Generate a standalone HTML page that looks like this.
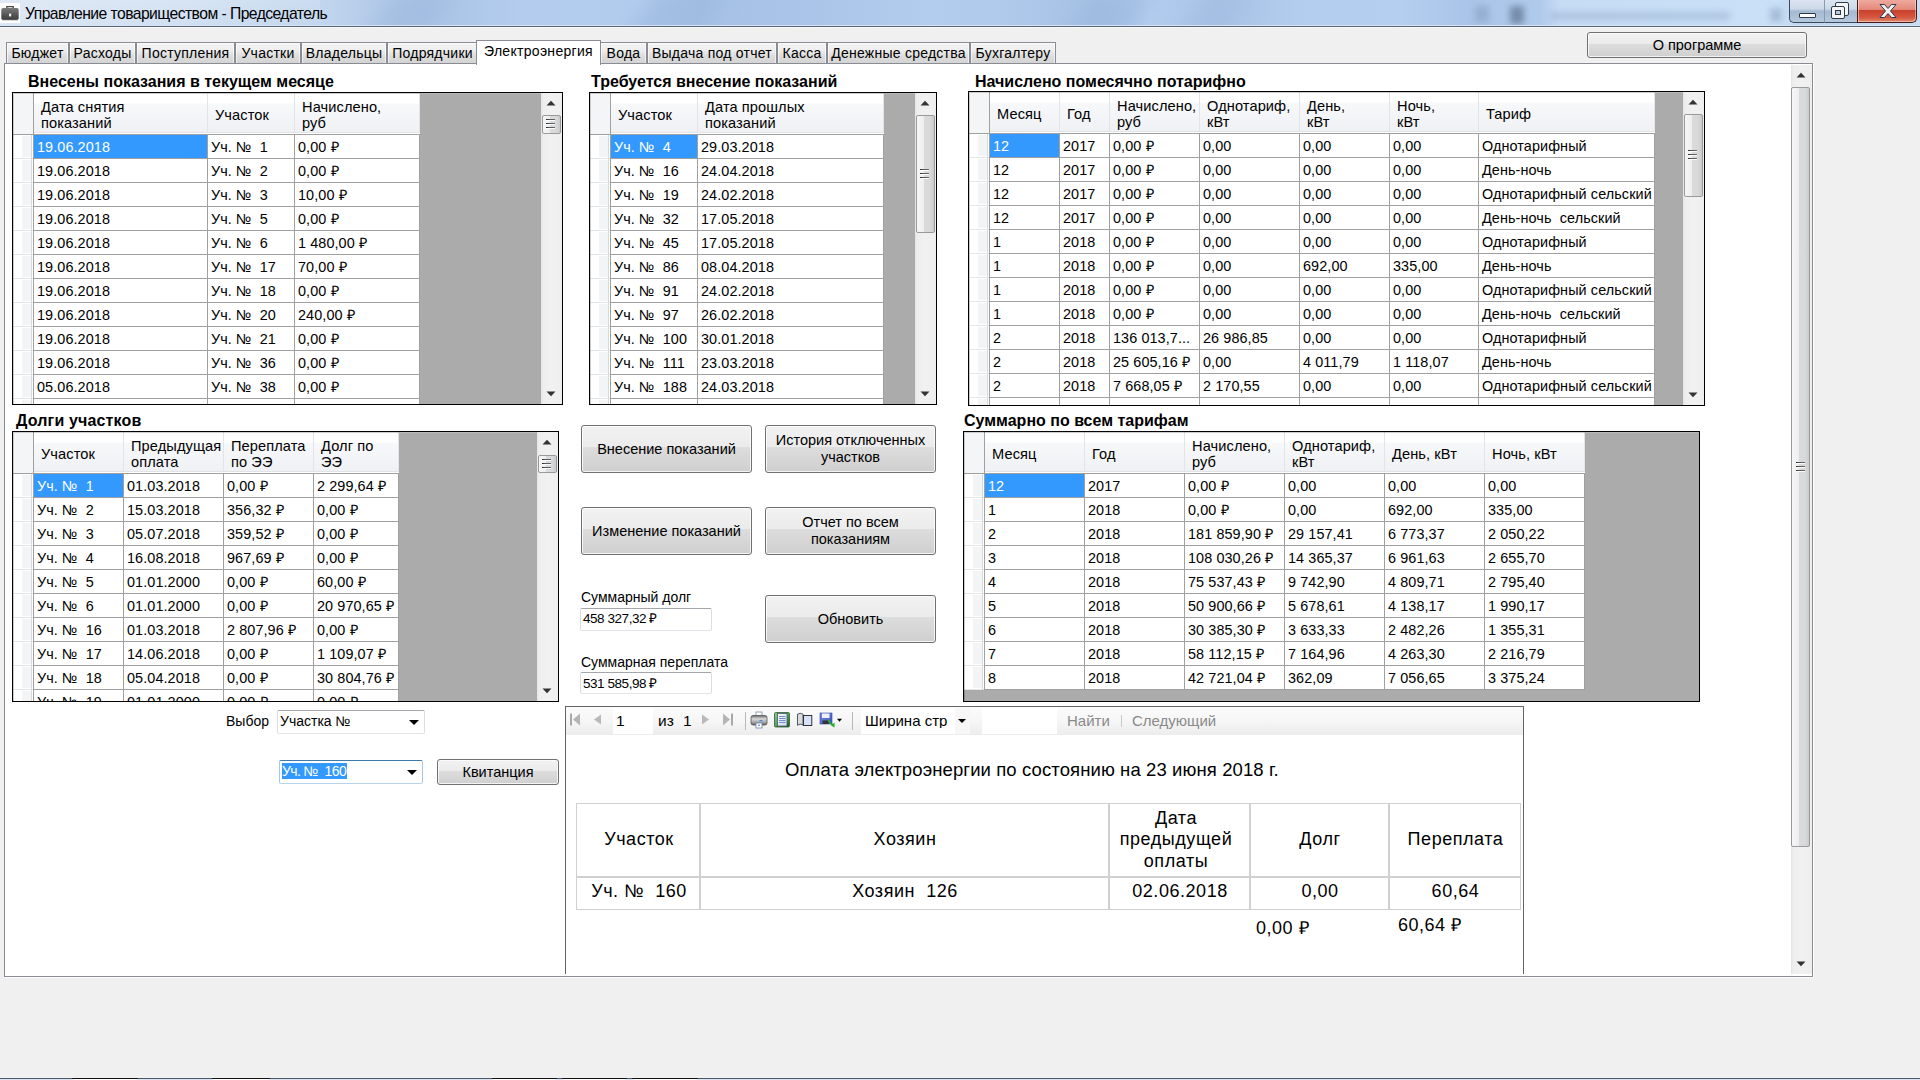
<!DOCTYPE html><html><head><meta charset='utf-8'><style>
*{box-sizing:border-box;margin:0;padding:0}
html,body{width:1920px;height:1080px;overflow:hidden;background:#f0f0f0;font-family:"Liberation Sans", sans-serif;font-size:14px;color:#000}
.a{position:absolute}
.t{position:absolute;white-space:pre;line-height:1}
.btn{position:absolute;border:1px solid #707070;border-radius:3px;background:linear-gradient(#f2f2f2 0%,#ebebeb 46%,#dddddd 46%,#cfcfcf 100%);box-shadow:inset 0 0 0 1px rgba(255,255,255,.75);display:flex;align-items:center;justify-content:center;text-align:center;line-height:17px;font-size:14.5px;padding-top:0px}
.tab{position:absolute;top:42px;height:22px;border:1px solid #898c95;border-bottom:none;background:linear-gradient(#f3f3f3 0%,#eeeeee 35%,#dedede 60%,#d2d2d2 100%);box-shadow:inset 0 0 0 1px rgba(255,255,255,.6);font-size:14px;padding-top:2px;text-align:center;white-space:pre;letter-spacing:0.25px}
.g{position:absolute;border:1px solid #000;background:#ababab;overflow:hidden}
.hc{position:absolute;background:linear-gradient(#fff 0,#fff 10px,#f7f8fa 11px,#f0f1f4 39px);border-right:1px solid #e3e4e7;white-space:pre;line-height:17px}
.rc{position:absolute;background:#fff;border-right:1px solid #a0a0a0;border-bottom:1px solid #a0a0a0;white-space:pre;overflow:hidden;line-height:17px;padding-left:3px;padding-top:3.5px;font-size:14.4px;letter-spacing:0.1px}
.sel{background:#3399ff;color:#fff}
.rh{position:absolute;background:linear-gradient(90deg,#fff 0,#fcfcfd 5px,#ececef 17px,#e8e8ea 18px,#fff 19px);border-bottom:1px solid #e9e9ea;border-right:1px solid #a0a0a0}
</style></head><body>
<div class='a' style='left:0;top:0;width:1920px;height:25px;overflow:hidden;background:linear-gradient(90deg,#dbe6f4 0px,#cfdff1 200px,#c2d6ee 320px,#a9c3e5 420px,#b4cdee 520px,#b2ccee 640px,#a6c1e4 700px,#a9c4e8 800px,#b3cdee 930px,#b0caec 1000px,#a5c0e3 1100px,#b3cdef 1150px,#a9c4e6 1220px,#b3cdee 1300px,#b5cff0 1400px,#a9c4e8 1470px,#b0caec 1540px,#c6dcf5 1560px,#c9e0f7 1780px,#c0d6f0 1800px,#c8dcf2 1920px)'>
<div class='a' style='left:380px;top:-10px;width:60px;height:50px;background:#9fbadf;filter:blur(12px);transform:skewX(-35deg);opacity:.6'></div>
<div class='a' style='left:640px;top:-10px;width:70px;height:50px;background:#9cb8de;filter:blur(12px);transform:skewX(-35deg);opacity:.6'></div>
<div class='a' style='left:1080px;top:-10px;width:60px;height:50px;background:#9cb8de;filter:blur(12px);transform:skewX(-35deg);opacity:.6'></div>
<div class='a' style='left:1190px;top:-10px;width:50px;height:50px;background:#a0bbe0;filter:blur(12px);transform:skewX(-35deg);opacity:.5'></div>
<div class='a' style='left:1475px;top:6px;width:14px;height:16px;background:#90aacb;filter:blur(3px);opacity:.8'></div>
<div class='a' style='left:1510px;top:6px;width:14px;height:18px;background:#6a7f9c;filter:blur(3px);opacity:.8'></div>
<div class='a' style='left:1550px;top:12px;width:180px;height:8px;background:#9fb6d3;filter:blur(3px);opacity:.6'></div>
<div class='a' style='left:1770px;top:8px;width:12px;height:14px;background:#8ea6c6;filter:blur(3px);opacity:.6'></div>
<div class='a' style='left:0;top:0;width:320px;height:25px;background:linear-gradient(rgba(255,255,255,.15),rgba(255,255,255,0))'></div>
</div>
<div class='a' style='left:0;top:25px;width:1920px;height:1px;background:#d6e4f5'></div>
<div class='a' style='left:0;top:26px;width:1920px;height:1px;background:#5a6678'></div>
<div class='a' style='left:0;top:27px;width:1920px;height:1px;background:#f8f8f7'></div>

<div class='a' style='left:0;top:3px;width:20px;height:20px;background:#fff'></div>
<svg class='a' style='left:0;top:3px' width='20' height='20' viewBox='0 0 20 20'>
<defs><linearGradient id='bc' x1='0' y1='0' x2='0' y2='1'><stop offset='0' stop-color='#7a7a7a'/><stop offset='.45' stop-color='#5c5c5c'/><stop offset='1' stop-color='#3e3e3e'/></linearGradient></defs>
<path d='M6.8 5.2V3.6h6.4v1.6' fill='none' stroke='#4a4a4a' stroke-width='1.3'/>
<rect x='1.3' y='5' width='17.4' height='12' rx='1.8' fill='url(#bc)'/>
<rect x='2' y='16.6' width='16' height='1' fill='#9a9a9a' opacity='.6'/>
<rect x='9' y='10.6' width='2.2' height='2.8' fill='#f0f0f0'/>
</svg>
<div class='t' style='left:25px;top:6px;font-size:15.7px;letter-spacing:-0.55px'>Управление товариществом - Председатель</div>
<div class='a' style='left:1789px;top:-2px;width:36px;height:25px;border:1px solid #3b4a5e;border-top:none;border-right:none;border-radius:0 0 0 5px;background:linear-gradient(#dfe8f3 0,#cdd9e8 45%,#a6b9d2 55%,#b6c8de 100%)'></div>
<div class='a' style='left:1824px;top:-2px;width:34px;height:25px;border-bottom:1px solid #3b4a5e;border-left:1px solid #8a9ab0;background:linear-gradient(#dfe8f3 0,#cdd9e8 45%,#a6b9d2 55%,#b6c8de 100%)'></div>
<div class='a' style='left:1857px;top:-2px;width:60px;height:25px;border:1px solid #4a1a12;border-top:none;border-radius:0 0 5px 0;background:linear-gradient(#f2b0a6 0,#e2897a 48%,#c9412d 52%,#d6563f 80%,#e08a6c 100%);box-shadow:inset 1px 0 0 rgba(255,255,255,.5),inset -1px -1px 0 rgba(255,255,255,.4)'></div>
<div class='a' style='left:1799px;top:13px;width:17px;height:5px;background:#fff;border:1px solid #2c3a4c;border-radius:1px'></div>
<div class='a' style='left:1835px;top:2px;width:14px;height:14px;background:#f4f4f4;border:1px solid #2c3a4c;border-radius:2px'></div>
<div class='a' style='left:1831px;top:6px;width:14px;height:13px;background:#f4f4f4;border:1px solid #2c3a4c;border-radius:2px'></div>
<div class='a' style='left:1835px;top:10px;width:6px;height:5px;background:#b8c8dc;border:1px solid #2c3a4c'></div>
<svg class='a' style='left:1876px;top:3px' width='24' height='16' viewBox='0 0 24 16'>
<path d='M4 1.5h4.5L12 5.5l3.5-4H20L14.5 8 20 14.5h-4.5L12 10.5l-3.5 4H4L9.5 8z' fill='#f2f2f2' stroke='#2c3a4c' stroke-width='1'/>
</svg>

<div class='tab' style='left:6px;width:63px'>Бюджет</div>
<div class='tab' style='left:69px;width:67px'>Расходы</div>
<div class='tab' style='left:136px;width:99px'>Поступления</div>
<div class='tab' style='left:235px;width:66px'>Участки</div>
<div class='tab' style='left:301px;width:86px'>Владельцы</div>
<div class='tab' style='left:387px;width:91px'>Подрядчики</div>
<div class='tab' style='left:600px;width:47px'>Вода</div>
<div class='tab' style='left:647px;width:130px'>Выдача под отчет</div>
<div class='tab' style='left:777px;width:50px'>Касса</div>
<div class='tab' style='left:827px;width:143px'>Денежные средства</div>
<div class='tab' style='left:970px;width:86px'>Бухгалтеру</div>
<div class='a' style='left:4px;top:63px;width:1809px;height:914px;background:#fff;border:1px solid #898c95'></div>
<div class='a' style='left:5px;top:977px;width:1809px;height:1px;background:#fff'></div><div class='a' style='left:1813px;top:64px;width:1px;height:914px;background:#fff'></div>
<div class='a' style='left:476px;top:40px;width:125px;height:25px;background:#fff;border:1px solid #898c95;border-bottom:none;font-size:14px;text-align:center;padding-top:2px;white-space:pre;letter-spacing:0.3px'>Электроэнергия</div>
<div class='btn' style='left:1587px;top:32px;width:220px;height:26px'>О программе</div>
<div class='a' style='left:1791px;top:65px;width:21px;height:909px;background:linear-gradient(90deg,#e3e3e3 0,#eeeeee 2px,#f1f1f1 50%,#eeeeee 100%)'></div><svg class='a' style='left:1796px;top:72px' width='10' height='6'><path d='M0.5 5.5L5 0.8 9.5 5.5z' fill='#333'/></svg><svg class='a' style='left:1796px;top:961px' width='10' height='6'><path d='M0.5 0.5L5 5.2 9.5 0.5z' fill='#333'/></svg><div class='a' style='left:1791px;top:87px;width:19px;height:760px;border:1px solid #9a9a9a;border-radius:2px;background:linear-gradient(90deg,#f6f6f6 0,#eeeeee 40%,#dadbdd 41%,#d7d8da 80%,#c9cacc 100%)'></div><div class='a' style='left:1796px;top:462px;width:9px;height:1px;background:linear-gradient(90deg,#222,#555 30%,#666);box-shadow:0 1px 0 rgba(255,255,255,.9)'></div><div class='a' style='left:1796px;top:466px;width:9px;height:1px;background:linear-gradient(90deg,#222,#555 30%,#666);box-shadow:0 1px 0 rgba(255,255,255,.9)'></div><div class='a' style='left:1796px;top:470px;width:9px;height:1px;background:linear-gradient(90deg,#222,#555 30%,#666);box-shadow:0 1px 0 rgba(255,255,255,.9)'></div>
<div class='t' style='left:28px;top:74px;font-weight:bold;font-size:16px;letter-spacing:0px'>Внесены показания в текущем месяце</div>
<div class='g' style='left:12px;top:92px;width:551px;height:313px'><div class='a' style='left:0;top:0;width:20px;height:41px;background:#f4f5f7;box-shadow:inset 1px 1px 0 #fff'></div><div class='a' style='left:20px;top:0;width:1px;height:41px;background:#a0a0a0'></div><div class='hc' style='left:21px;top:0;width:174px;height:41px'></div><div class='t' style='left:28px;top:6.3px;line-height:16px;font-size:14.6px;letter-spacing:0.1px'>Дата снятия
показаний</div><div class='hc' style='left:195px;top:0;width:87px;height:41px'></div><div class='t' style='left:202px;top:14.3px;line-height:16px;font-size:14.6px;letter-spacing:0.1px'>Участок</div><div class='hc' style='left:282px;top:0;width:125px;height:41px'></div><div class='t' style='left:289px;top:6.3px;line-height:16px;font-size:14.6px;letter-spacing:0.1px'>Начислено,
руб</div><div class='a' style='left:21px;top:39px;width:386px;height:1px;background:#e2e3e6'></div><div class='a' style='left:21px;top:40px;width:386px;height:1px;background:#fff'></div><div class='a' style='left:0;top:41px;width:407px;height:1px;background:#a0a0a0'></div><div class='a' style='left:0;top:42px;width:20px;height:24px;background:#fff;border-bottom:1px solid #e4e5e7'></div><div class='a' style='left:9px;top:43px;width:9px;height:21px;background:#f3f4f6'></div><div class='a' style='left:18px;top:42px;width:1px;height:24px;background:#d9dadc'></div><div class='a' style='left:20px;top:42px;width:1px;height:24px;background:#a0a0a0'></div><div class='rc sel' style='left:21px;top:42px;width:174px;height:24px'>19.06.2018</div><div class='rc' style='left:195px;top:42px;width:87px;height:24px'>Уч. №  1</div><div class='rc' style='left:282px;top:42px;width:125px;height:24px'>0,00 ₽</div><div class='a' style='left:0;top:66px;width:20px;height:24px;background:#fff;border-bottom:1px solid #e4e5e7'></div><div class='a' style='left:9px;top:67px;width:9px;height:21px;background:#f3f4f6'></div><div class='a' style='left:18px;top:66px;width:1px;height:24px;background:#d9dadc'></div><div class='a' style='left:20px;top:66px;width:1px;height:24px;background:#a0a0a0'></div><div class='rc' style='left:21px;top:66px;width:174px;height:24px'>19.06.2018</div><div class='rc' style='left:195px;top:66px;width:87px;height:24px'>Уч. №  2</div><div class='rc' style='left:282px;top:66px;width:125px;height:24px'>0,00 ₽</div><div class='a' style='left:0;top:90px;width:20px;height:24px;background:#fff;border-bottom:1px solid #e4e5e7'></div><div class='a' style='left:9px;top:91px;width:9px;height:21px;background:#f3f4f6'></div><div class='a' style='left:18px;top:90px;width:1px;height:24px;background:#d9dadc'></div><div class='a' style='left:20px;top:90px;width:1px;height:24px;background:#a0a0a0'></div><div class='rc' style='left:21px;top:90px;width:174px;height:24px'>19.06.2018</div><div class='rc' style='left:195px;top:90px;width:87px;height:24px'>Уч. №  3</div><div class='rc' style='left:282px;top:90px;width:125px;height:24px'>10,00 ₽</div><div class='a' style='left:0;top:114px;width:20px;height:24px;background:#fff;border-bottom:1px solid #e4e5e7'></div><div class='a' style='left:9px;top:115px;width:9px;height:21px;background:#f3f4f6'></div><div class='a' style='left:18px;top:114px;width:1px;height:24px;background:#d9dadc'></div><div class='a' style='left:20px;top:114px;width:1px;height:24px;background:#a0a0a0'></div><div class='rc' style='left:21px;top:114px;width:174px;height:24px'>19.06.2018</div><div class='rc' style='left:195px;top:114px;width:87px;height:24px'>Уч. №  5</div><div class='rc' style='left:282px;top:114px;width:125px;height:24px'>0,00 ₽</div><div class='a' style='left:0;top:138px;width:20px;height:24px;background:#fff;border-bottom:1px solid #e4e5e7'></div><div class='a' style='left:9px;top:139px;width:9px;height:21px;background:#f3f4f6'></div><div class='a' style='left:18px;top:138px;width:1px;height:24px;background:#d9dadc'></div><div class='a' style='left:20px;top:138px;width:1px;height:24px;background:#a0a0a0'></div><div class='rc' style='left:21px;top:138px;width:174px;height:24px'>19.06.2018</div><div class='rc' style='left:195px;top:138px;width:87px;height:24px'>Уч. №  6</div><div class='rc' style='left:282px;top:138px;width:125px;height:24px'>1 480,00 ₽</div><div class='a' style='left:0;top:162px;width:20px;height:24px;background:#fff;border-bottom:1px solid #e4e5e7'></div><div class='a' style='left:9px;top:163px;width:9px;height:21px;background:#f3f4f6'></div><div class='a' style='left:18px;top:162px;width:1px;height:24px;background:#d9dadc'></div><div class='a' style='left:20px;top:162px;width:1px;height:24px;background:#a0a0a0'></div><div class='rc' style='left:21px;top:162px;width:174px;height:24px'>19.06.2018</div><div class='rc' style='left:195px;top:162px;width:87px;height:24px'>Уч. №  17</div><div class='rc' style='left:282px;top:162px;width:125px;height:24px'>70,00 ₽</div><div class='a' style='left:0;top:186px;width:20px;height:24px;background:#fff;border-bottom:1px solid #e4e5e7'></div><div class='a' style='left:9px;top:187px;width:9px;height:21px;background:#f3f4f6'></div><div class='a' style='left:18px;top:186px;width:1px;height:24px;background:#d9dadc'></div><div class='a' style='left:20px;top:186px;width:1px;height:24px;background:#a0a0a0'></div><div class='rc' style='left:21px;top:186px;width:174px;height:24px'>19.06.2018</div><div class='rc' style='left:195px;top:186px;width:87px;height:24px'>Уч. №  18</div><div class='rc' style='left:282px;top:186px;width:125px;height:24px'>0,00 ₽</div><div class='a' style='left:0;top:210px;width:20px;height:24px;background:#fff;border-bottom:1px solid #e4e5e7'></div><div class='a' style='left:9px;top:211px;width:9px;height:21px;background:#f3f4f6'></div><div class='a' style='left:18px;top:210px;width:1px;height:24px;background:#d9dadc'></div><div class='a' style='left:20px;top:210px;width:1px;height:24px;background:#a0a0a0'></div><div class='rc' style='left:21px;top:210px;width:174px;height:24px'>19.06.2018</div><div class='rc' style='left:195px;top:210px;width:87px;height:24px'>Уч. №  20</div><div class='rc' style='left:282px;top:210px;width:125px;height:24px'>240,00 ₽</div><div class='a' style='left:0;top:234px;width:20px;height:24px;background:#fff;border-bottom:1px solid #e4e5e7'></div><div class='a' style='left:9px;top:235px;width:9px;height:21px;background:#f3f4f6'></div><div class='a' style='left:18px;top:234px;width:1px;height:24px;background:#d9dadc'></div><div class='a' style='left:20px;top:234px;width:1px;height:24px;background:#a0a0a0'></div><div class='rc' style='left:21px;top:234px;width:174px;height:24px'>19.06.2018</div><div class='rc' style='left:195px;top:234px;width:87px;height:24px'>Уч. №  21</div><div class='rc' style='left:282px;top:234px;width:125px;height:24px'>0,00 ₽</div><div class='a' style='left:0;top:258px;width:20px;height:24px;background:#fff;border-bottom:1px solid #e4e5e7'></div><div class='a' style='left:9px;top:259px;width:9px;height:21px;background:#f3f4f6'></div><div class='a' style='left:18px;top:258px;width:1px;height:24px;background:#d9dadc'></div><div class='a' style='left:20px;top:258px;width:1px;height:24px;background:#a0a0a0'></div><div class='rc' style='left:21px;top:258px;width:174px;height:24px'>19.06.2018</div><div class='rc' style='left:195px;top:258px;width:87px;height:24px'>Уч. №  36</div><div class='rc' style='left:282px;top:258px;width:125px;height:24px'>0,00 ₽</div><div class='a' style='left:0;top:282px;width:20px;height:24px;background:#fff;border-bottom:1px solid #e4e5e7'></div><div class='a' style='left:9px;top:283px;width:9px;height:21px;background:#f3f4f6'></div><div class='a' style='left:18px;top:282px;width:1px;height:24px;background:#d9dadc'></div><div class='a' style='left:20px;top:282px;width:1px;height:24px;background:#a0a0a0'></div><div class='rc' style='left:21px;top:282px;width:174px;height:24px'>05.06.2018</div><div class='rc' style='left:195px;top:282px;width:87px;height:24px'>Уч. №  38</div><div class='rc' style='left:282px;top:282px;width:125px;height:24px'>0,00 ₽</div><div class='a' style='left:0;top:306px;width:20px;height:24px;background:#fff;border-bottom:1px solid #e4e5e7'></div><div class='a' style='left:9px;top:307px;width:9px;height:21px;background:#f3f4f6'></div><div class='a' style='left:18px;top:306px;width:1px;height:24px;background:#d9dadc'></div><div class='a' style='left:20px;top:306px;width:1px;height:24px;background:#a0a0a0'></div><div class='rc' style='left:21px;top:306px;width:174px;height:24px'></div><div class='rc' style='left:195px;top:306px;width:87px;height:24px'></div><div class='rc' style='left:282px;top:306px;width:125px;height:24px'></div><div class='a' style='left:0;top:0;width:407px;height:311px;box-shadow:inset 1px 1px 0 rgba(0,0,0,.2)'></div><div class='a' style='left:407px;top:0;width:551px;height:1px;background:#b8b8b8'></div></div><div class='a' style='left:541px;top:93px;width:21px;height:311px;background:linear-gradient(90deg,#e3e3e3 0,#eeeeee 2px,#f1f1f1 50%,#eeeeee 100%)'></div><svg class='a' style='left:546px;top:100px' width='10' height='6'><path d='M0.5 5.5L5 0.8 9.5 5.5z' fill='#333'/></svg><svg class='a' style='left:546px;top:391px' width='10' height='6'><path d='M0.5 0.5L5 5.2 9.5 0.5z' fill='#333'/></svg><div class='a' style='left:542px;top:115px;width:19px;height:19px;border:1px solid #9a9a9a;border-radius:2px;background:linear-gradient(90deg,#f6f6f6 0,#eeeeee 40%,#dadbdd 41%,#d7d8da 80%,#c9cacc 100%)'></div><div class='a' style='left:546px;top:119px;width:9px;height:1px;background:linear-gradient(90deg,#222,#555 30%,#666);box-shadow:0 1px 0 rgba(255,255,255,.9)'></div><div class='a' style='left:546px;top:123px;width:9px;height:1px;background:linear-gradient(90deg,#222,#555 30%,#666);box-shadow:0 1px 0 rgba(255,255,255,.9)'></div><div class='a' style='left:546px;top:127px;width:9px;height:1px;background:linear-gradient(90deg,#222,#555 30%,#666);box-shadow:0 1px 0 rgba(255,255,255,.9)'></div>
<div class='t' style='left:591px;top:74px;font-weight:bold;font-size:16px;letter-spacing:0px'>Требуется внесение показаний</div>
<div class='g' style='left:589px;top:92px;width:348px;height:313px'><div class='a' style='left:0;top:0;width:20px;height:41px;background:#f4f5f7;box-shadow:inset 1px 1px 0 #fff'></div><div class='a' style='left:20px;top:0;width:1px;height:41px;background:#a0a0a0'></div><div class='hc' style='left:21px;top:0;width:87px;height:41px'></div><div class='t' style='left:28px;top:14.3px;line-height:16px;font-size:14.6px;letter-spacing:0.1px'>Участок</div><div class='hc' style='left:108px;top:0;width:186px;height:41px'></div><div class='t' style='left:115px;top:6.3px;line-height:16px;font-size:14.6px;letter-spacing:0.1px'>Дата прошлых
показаний</div><div class='a' style='left:21px;top:39px;width:273px;height:1px;background:#e2e3e6'></div><div class='a' style='left:21px;top:40px;width:273px;height:1px;background:#fff'></div><div class='a' style='left:0;top:41px;width:294px;height:1px;background:#a0a0a0'></div><div class='a' style='left:0;top:42px;width:20px;height:24px;background:#fff;border-bottom:1px solid #e4e5e7'></div><div class='a' style='left:9px;top:43px;width:9px;height:21px;background:#f3f4f6'></div><div class='a' style='left:18px;top:42px;width:1px;height:24px;background:#d9dadc'></div><div class='a' style='left:20px;top:42px;width:1px;height:24px;background:#a0a0a0'></div><div class='rc sel' style='left:21px;top:42px;width:87px;height:24px'>Уч. №  4</div><div class='rc' style='left:108px;top:42px;width:186px;height:24px'>29.03.2018</div><div class='a' style='left:0;top:66px;width:20px;height:24px;background:#fff;border-bottom:1px solid #e4e5e7'></div><div class='a' style='left:9px;top:67px;width:9px;height:21px;background:#f3f4f6'></div><div class='a' style='left:18px;top:66px;width:1px;height:24px;background:#d9dadc'></div><div class='a' style='left:20px;top:66px;width:1px;height:24px;background:#a0a0a0'></div><div class='rc' style='left:21px;top:66px;width:87px;height:24px'>Уч. №  16</div><div class='rc' style='left:108px;top:66px;width:186px;height:24px'>24.04.2018</div><div class='a' style='left:0;top:90px;width:20px;height:24px;background:#fff;border-bottom:1px solid #e4e5e7'></div><div class='a' style='left:9px;top:91px;width:9px;height:21px;background:#f3f4f6'></div><div class='a' style='left:18px;top:90px;width:1px;height:24px;background:#d9dadc'></div><div class='a' style='left:20px;top:90px;width:1px;height:24px;background:#a0a0a0'></div><div class='rc' style='left:21px;top:90px;width:87px;height:24px'>Уч. №  19</div><div class='rc' style='left:108px;top:90px;width:186px;height:24px'>24.02.2018</div><div class='a' style='left:0;top:114px;width:20px;height:24px;background:#fff;border-bottom:1px solid #e4e5e7'></div><div class='a' style='left:9px;top:115px;width:9px;height:21px;background:#f3f4f6'></div><div class='a' style='left:18px;top:114px;width:1px;height:24px;background:#d9dadc'></div><div class='a' style='left:20px;top:114px;width:1px;height:24px;background:#a0a0a0'></div><div class='rc' style='left:21px;top:114px;width:87px;height:24px'>Уч. №  32</div><div class='rc' style='left:108px;top:114px;width:186px;height:24px'>17.05.2018</div><div class='a' style='left:0;top:138px;width:20px;height:24px;background:#fff;border-bottom:1px solid #e4e5e7'></div><div class='a' style='left:9px;top:139px;width:9px;height:21px;background:#f3f4f6'></div><div class='a' style='left:18px;top:138px;width:1px;height:24px;background:#d9dadc'></div><div class='a' style='left:20px;top:138px;width:1px;height:24px;background:#a0a0a0'></div><div class='rc' style='left:21px;top:138px;width:87px;height:24px'>Уч. №  45</div><div class='rc' style='left:108px;top:138px;width:186px;height:24px'>17.05.2018</div><div class='a' style='left:0;top:162px;width:20px;height:24px;background:#fff;border-bottom:1px solid #e4e5e7'></div><div class='a' style='left:9px;top:163px;width:9px;height:21px;background:#f3f4f6'></div><div class='a' style='left:18px;top:162px;width:1px;height:24px;background:#d9dadc'></div><div class='a' style='left:20px;top:162px;width:1px;height:24px;background:#a0a0a0'></div><div class='rc' style='left:21px;top:162px;width:87px;height:24px'>Уч. №  86</div><div class='rc' style='left:108px;top:162px;width:186px;height:24px'>08.04.2018</div><div class='a' style='left:0;top:186px;width:20px;height:24px;background:#fff;border-bottom:1px solid #e4e5e7'></div><div class='a' style='left:9px;top:187px;width:9px;height:21px;background:#f3f4f6'></div><div class='a' style='left:18px;top:186px;width:1px;height:24px;background:#d9dadc'></div><div class='a' style='left:20px;top:186px;width:1px;height:24px;background:#a0a0a0'></div><div class='rc' style='left:21px;top:186px;width:87px;height:24px'>Уч. №  91</div><div class='rc' style='left:108px;top:186px;width:186px;height:24px'>24.02.2018</div><div class='a' style='left:0;top:210px;width:20px;height:24px;background:#fff;border-bottom:1px solid #e4e5e7'></div><div class='a' style='left:9px;top:211px;width:9px;height:21px;background:#f3f4f6'></div><div class='a' style='left:18px;top:210px;width:1px;height:24px;background:#d9dadc'></div><div class='a' style='left:20px;top:210px;width:1px;height:24px;background:#a0a0a0'></div><div class='rc' style='left:21px;top:210px;width:87px;height:24px'>Уч. №  97</div><div class='rc' style='left:108px;top:210px;width:186px;height:24px'>26.02.2018</div><div class='a' style='left:0;top:234px;width:20px;height:24px;background:#fff;border-bottom:1px solid #e4e5e7'></div><div class='a' style='left:9px;top:235px;width:9px;height:21px;background:#f3f4f6'></div><div class='a' style='left:18px;top:234px;width:1px;height:24px;background:#d9dadc'></div><div class='a' style='left:20px;top:234px;width:1px;height:24px;background:#a0a0a0'></div><div class='rc' style='left:21px;top:234px;width:87px;height:24px'>Уч. №  100</div><div class='rc' style='left:108px;top:234px;width:186px;height:24px'>30.01.2018</div><div class='a' style='left:0;top:258px;width:20px;height:24px;background:#fff;border-bottom:1px solid #e4e5e7'></div><div class='a' style='left:9px;top:259px;width:9px;height:21px;background:#f3f4f6'></div><div class='a' style='left:18px;top:258px;width:1px;height:24px;background:#d9dadc'></div><div class='a' style='left:20px;top:258px;width:1px;height:24px;background:#a0a0a0'></div><div class='rc' style='left:21px;top:258px;width:87px;height:24px'>Уч. №  111</div><div class='rc' style='left:108px;top:258px;width:186px;height:24px'>23.03.2018</div><div class='a' style='left:0;top:282px;width:20px;height:24px;background:#fff;border-bottom:1px solid #e4e5e7'></div><div class='a' style='left:9px;top:283px;width:9px;height:21px;background:#f3f4f6'></div><div class='a' style='left:18px;top:282px;width:1px;height:24px;background:#d9dadc'></div><div class='a' style='left:20px;top:282px;width:1px;height:24px;background:#a0a0a0'></div><div class='rc' style='left:21px;top:282px;width:87px;height:24px'>Уч. №  188</div><div class='rc' style='left:108px;top:282px;width:186px;height:24px'>24.03.2018</div><div class='a' style='left:0;top:306px;width:20px;height:24px;background:#fff;border-bottom:1px solid #e4e5e7'></div><div class='a' style='left:9px;top:307px;width:9px;height:21px;background:#f3f4f6'></div><div class='a' style='left:18px;top:306px;width:1px;height:24px;background:#d9dadc'></div><div class='a' style='left:20px;top:306px;width:1px;height:24px;background:#a0a0a0'></div><div class='rc' style='left:21px;top:306px;width:87px;height:24px'>Уч. №  </div><div class='rc' style='left:108px;top:306px;width:186px;height:24px'></div><div class='a' style='left:0;top:0;width:294px;height:311px;box-shadow:inset 1px 1px 0 rgba(0,0,0,.2)'></div><div class='a' style='left:294px;top:0;width:348px;height:1px;background:#b8b8b8'></div></div><div class='a' style='left:915px;top:93px;width:21px;height:311px;background:linear-gradient(90deg,#e3e3e3 0,#eeeeee 2px,#f1f1f1 50%,#eeeeee 100%)'></div><svg class='a' style='left:920px;top:100px' width='10' height='6'><path d='M0.5 5.5L5 0.8 9.5 5.5z' fill='#333'/></svg><svg class='a' style='left:920px;top:391px' width='10' height='6'><path d='M0.5 0.5L5 5.2 9.5 0.5z' fill='#333'/></svg><div class='a' style='left:916px;top:115px;width:19px;height:118px;border:1px solid #9a9a9a;border-radius:2px;background:linear-gradient(90deg,#f6f6f6 0,#eeeeee 40%,#dadbdd 41%,#d7d8da 80%,#c9cacc 100%)'></div><div class='a' style='left:920px;top:169px;width:9px;height:1px;background:linear-gradient(90deg,#222,#555 30%,#666);box-shadow:0 1px 0 rgba(255,255,255,.9)'></div><div class='a' style='left:920px;top:173px;width:9px;height:1px;background:linear-gradient(90deg,#222,#555 30%,#666);box-shadow:0 1px 0 rgba(255,255,255,.9)'></div><div class='a' style='left:920px;top:177px;width:9px;height:1px;background:linear-gradient(90deg,#222,#555 30%,#666);box-shadow:0 1px 0 rgba(255,255,255,.9)'></div>
<div class='t' style='left:975px;top:74px;font-weight:bold;font-size:16px;letter-spacing:0px'>Начислено помесячно потарифно</div>
<div class='g' style='left:968px;top:91px;width:737px;height:315px'><div class='a' style='left:0;top:0;width:20px;height:41px;background:#f4f5f7;box-shadow:inset 1px 1px 0 #fff'></div><div class='a' style='left:20px;top:0;width:1px;height:41px;background:#a0a0a0'></div><div class='hc' style='left:21px;top:0;width:70px;height:41px'></div><div class='t' style='left:28px;top:14.3px;line-height:16px;font-size:14.6px;letter-spacing:0.1px'>Месяц</div><div class='hc' style='left:91px;top:0;width:50px;height:41px'></div><div class='t' style='left:98px;top:14.3px;line-height:16px;font-size:14.6px;letter-spacing:0.1px'>Год</div><div class='hc' style='left:141px;top:0;width:90px;height:41px'></div><div class='t' style='left:148px;top:6.3px;line-height:16px;font-size:14.6px;letter-spacing:0.1px'>Начислено,
руб</div><div class='hc' style='left:231px;top:0;width:100px;height:41px'></div><div class='t' style='left:238px;top:6.3px;line-height:16px;font-size:14.6px;letter-spacing:0.1px'>Однотариф,
кВт</div><div class='hc' style='left:331px;top:0;width:90px;height:41px'></div><div class='t' style='left:338px;top:6.3px;line-height:16px;font-size:14.6px;letter-spacing:0.1px'>День,
кВт</div><div class='hc' style='left:421px;top:0;width:89px;height:41px'></div><div class='t' style='left:428px;top:6.3px;line-height:16px;font-size:14.6px;letter-spacing:0.1px'>Ночь,
кВт</div><div class='hc' style='left:510px;top:0;width:176px;height:41px'></div><div class='t' style='left:517px;top:14.3px;line-height:16px;font-size:14.6px;letter-spacing:0.1px'>Тариф</div><div class='a' style='left:21px;top:39px;width:665px;height:1px;background:#e2e3e6'></div><div class='a' style='left:21px;top:40px;width:665px;height:1px;background:#fff'></div><div class='a' style='left:0;top:41px;width:686px;height:1px;background:#a0a0a0'></div><div class='a' style='left:0;top:42px;width:20px;height:24px;background:#fff;border-bottom:1px solid #e4e5e7'></div><div class='a' style='left:9px;top:43px;width:9px;height:21px;background:#f3f4f6'></div><div class='a' style='left:18px;top:42px;width:1px;height:24px;background:#d9dadc'></div><div class='a' style='left:20px;top:42px;width:1px;height:24px;background:#a0a0a0'></div><div class='rc sel' style='left:21px;top:42px;width:70px;height:24px'>12</div><div class='rc' style='left:91px;top:42px;width:50px;height:24px'>2017</div><div class='rc' style='left:141px;top:42px;width:90px;height:24px'>0,00 ₽</div><div class='rc' style='left:231px;top:42px;width:100px;height:24px'>0,00</div><div class='rc' style='left:331px;top:42px;width:90px;height:24px'>0,00</div><div class='rc' style='left:421px;top:42px;width:89px;height:24px'>0,00</div><div class='rc' style='left:510px;top:42px;width:176px;height:24px'>Однотарифный</div><div class='a' style='left:0;top:66px;width:20px;height:24px;background:#fff;border-bottom:1px solid #e4e5e7'></div><div class='a' style='left:9px;top:67px;width:9px;height:21px;background:#f3f4f6'></div><div class='a' style='left:18px;top:66px;width:1px;height:24px;background:#d9dadc'></div><div class='a' style='left:20px;top:66px;width:1px;height:24px;background:#a0a0a0'></div><div class='rc' style='left:21px;top:66px;width:70px;height:24px'>12</div><div class='rc' style='left:91px;top:66px;width:50px;height:24px'>2017</div><div class='rc' style='left:141px;top:66px;width:90px;height:24px'>0,00 ₽</div><div class='rc' style='left:231px;top:66px;width:100px;height:24px'>0,00</div><div class='rc' style='left:331px;top:66px;width:90px;height:24px'>0,00</div><div class='rc' style='left:421px;top:66px;width:89px;height:24px'>0,00</div><div class='rc' style='left:510px;top:66px;width:176px;height:24px'>День-ночь</div><div class='a' style='left:0;top:90px;width:20px;height:24px;background:#fff;border-bottom:1px solid #e4e5e7'></div><div class='a' style='left:9px;top:91px;width:9px;height:21px;background:#f3f4f6'></div><div class='a' style='left:18px;top:90px;width:1px;height:24px;background:#d9dadc'></div><div class='a' style='left:20px;top:90px;width:1px;height:24px;background:#a0a0a0'></div><div class='rc' style='left:21px;top:90px;width:70px;height:24px'>12</div><div class='rc' style='left:91px;top:90px;width:50px;height:24px'>2017</div><div class='rc' style='left:141px;top:90px;width:90px;height:24px'>0,00 ₽</div><div class='rc' style='left:231px;top:90px;width:100px;height:24px'>0,00</div><div class='rc' style='left:331px;top:90px;width:90px;height:24px'>0,00</div><div class='rc' style='left:421px;top:90px;width:89px;height:24px'>0,00</div><div class='rc' style='left:510px;top:90px;width:176px;height:24px'>Однотарифный сельский</div><div class='a' style='left:0;top:114px;width:20px;height:24px;background:#fff;border-bottom:1px solid #e4e5e7'></div><div class='a' style='left:9px;top:115px;width:9px;height:21px;background:#f3f4f6'></div><div class='a' style='left:18px;top:114px;width:1px;height:24px;background:#d9dadc'></div><div class='a' style='left:20px;top:114px;width:1px;height:24px;background:#a0a0a0'></div><div class='rc' style='left:21px;top:114px;width:70px;height:24px'>12</div><div class='rc' style='left:91px;top:114px;width:50px;height:24px'>2017</div><div class='rc' style='left:141px;top:114px;width:90px;height:24px'>0,00 ₽</div><div class='rc' style='left:231px;top:114px;width:100px;height:24px'>0,00</div><div class='rc' style='left:331px;top:114px;width:90px;height:24px'>0,00</div><div class='rc' style='left:421px;top:114px;width:89px;height:24px'>0,00</div><div class='rc' style='left:510px;top:114px;width:176px;height:24px'>День-ночь  сельский</div><div class='a' style='left:0;top:138px;width:20px;height:24px;background:#fff;border-bottom:1px solid #e4e5e7'></div><div class='a' style='left:9px;top:139px;width:9px;height:21px;background:#f3f4f6'></div><div class='a' style='left:18px;top:138px;width:1px;height:24px;background:#d9dadc'></div><div class='a' style='left:20px;top:138px;width:1px;height:24px;background:#a0a0a0'></div><div class='rc' style='left:21px;top:138px;width:70px;height:24px'>1</div><div class='rc' style='left:91px;top:138px;width:50px;height:24px'>2018</div><div class='rc' style='left:141px;top:138px;width:90px;height:24px'>0,00 ₽</div><div class='rc' style='left:231px;top:138px;width:100px;height:24px'>0,00</div><div class='rc' style='left:331px;top:138px;width:90px;height:24px'>0,00</div><div class='rc' style='left:421px;top:138px;width:89px;height:24px'>0,00</div><div class='rc' style='left:510px;top:138px;width:176px;height:24px'>Однотарифный</div><div class='a' style='left:0;top:162px;width:20px;height:24px;background:#fff;border-bottom:1px solid #e4e5e7'></div><div class='a' style='left:9px;top:163px;width:9px;height:21px;background:#f3f4f6'></div><div class='a' style='left:18px;top:162px;width:1px;height:24px;background:#d9dadc'></div><div class='a' style='left:20px;top:162px;width:1px;height:24px;background:#a0a0a0'></div><div class='rc' style='left:21px;top:162px;width:70px;height:24px'>1</div><div class='rc' style='left:91px;top:162px;width:50px;height:24px'>2018</div><div class='rc' style='left:141px;top:162px;width:90px;height:24px'>0,00 ₽</div><div class='rc' style='left:231px;top:162px;width:100px;height:24px'>0,00</div><div class='rc' style='left:331px;top:162px;width:90px;height:24px'>692,00</div><div class='rc' style='left:421px;top:162px;width:89px;height:24px'>335,00</div><div class='rc' style='left:510px;top:162px;width:176px;height:24px'>День-ночь</div><div class='a' style='left:0;top:186px;width:20px;height:24px;background:#fff;border-bottom:1px solid #e4e5e7'></div><div class='a' style='left:9px;top:187px;width:9px;height:21px;background:#f3f4f6'></div><div class='a' style='left:18px;top:186px;width:1px;height:24px;background:#d9dadc'></div><div class='a' style='left:20px;top:186px;width:1px;height:24px;background:#a0a0a0'></div><div class='rc' style='left:21px;top:186px;width:70px;height:24px'>1</div><div class='rc' style='left:91px;top:186px;width:50px;height:24px'>2018</div><div class='rc' style='left:141px;top:186px;width:90px;height:24px'>0,00 ₽</div><div class='rc' style='left:231px;top:186px;width:100px;height:24px'>0,00</div><div class='rc' style='left:331px;top:186px;width:90px;height:24px'>0,00</div><div class='rc' style='left:421px;top:186px;width:89px;height:24px'>0,00</div><div class='rc' style='left:510px;top:186px;width:176px;height:24px'>Однотарифный сельский</div><div class='a' style='left:0;top:210px;width:20px;height:24px;background:#fff;border-bottom:1px solid #e4e5e7'></div><div class='a' style='left:9px;top:211px;width:9px;height:21px;background:#f3f4f6'></div><div class='a' style='left:18px;top:210px;width:1px;height:24px;background:#d9dadc'></div><div class='a' style='left:20px;top:210px;width:1px;height:24px;background:#a0a0a0'></div><div class='rc' style='left:21px;top:210px;width:70px;height:24px'>1</div><div class='rc' style='left:91px;top:210px;width:50px;height:24px'>2018</div><div class='rc' style='left:141px;top:210px;width:90px;height:24px'>0,00 ₽</div><div class='rc' style='left:231px;top:210px;width:100px;height:24px'>0,00</div><div class='rc' style='left:331px;top:210px;width:90px;height:24px'>0,00</div><div class='rc' style='left:421px;top:210px;width:89px;height:24px'>0,00</div><div class='rc' style='left:510px;top:210px;width:176px;height:24px'>День-ночь  сельский</div><div class='a' style='left:0;top:234px;width:20px;height:24px;background:#fff;border-bottom:1px solid #e4e5e7'></div><div class='a' style='left:9px;top:235px;width:9px;height:21px;background:#f3f4f6'></div><div class='a' style='left:18px;top:234px;width:1px;height:24px;background:#d9dadc'></div><div class='a' style='left:20px;top:234px;width:1px;height:24px;background:#a0a0a0'></div><div class='rc' style='left:21px;top:234px;width:70px;height:24px'>2</div><div class='rc' style='left:91px;top:234px;width:50px;height:24px'>2018</div><div class='rc' style='left:141px;top:234px;width:90px;height:24px'>136 013,7...</div><div class='rc' style='left:231px;top:234px;width:100px;height:24px'>26 986,85</div><div class='rc' style='left:331px;top:234px;width:90px;height:24px'>0,00</div><div class='rc' style='left:421px;top:234px;width:89px;height:24px'>0,00</div><div class='rc' style='left:510px;top:234px;width:176px;height:24px'>Однотарифный</div><div class='a' style='left:0;top:258px;width:20px;height:24px;background:#fff;border-bottom:1px solid #e4e5e7'></div><div class='a' style='left:9px;top:259px;width:9px;height:21px;background:#f3f4f6'></div><div class='a' style='left:18px;top:258px;width:1px;height:24px;background:#d9dadc'></div><div class='a' style='left:20px;top:258px;width:1px;height:24px;background:#a0a0a0'></div><div class='rc' style='left:21px;top:258px;width:70px;height:24px'>2</div><div class='rc' style='left:91px;top:258px;width:50px;height:24px'>2018</div><div class='rc' style='left:141px;top:258px;width:90px;height:24px'>25 605,16 ₽</div><div class='rc' style='left:231px;top:258px;width:100px;height:24px'>0,00</div><div class='rc' style='left:331px;top:258px;width:90px;height:24px'>4 011,79</div><div class='rc' style='left:421px;top:258px;width:89px;height:24px'>1 118,07</div><div class='rc' style='left:510px;top:258px;width:176px;height:24px'>День-ночь</div><div class='a' style='left:0;top:282px;width:20px;height:24px;background:#fff;border-bottom:1px solid #e4e5e7'></div><div class='a' style='left:9px;top:283px;width:9px;height:21px;background:#f3f4f6'></div><div class='a' style='left:18px;top:282px;width:1px;height:24px;background:#d9dadc'></div><div class='a' style='left:20px;top:282px;width:1px;height:24px;background:#a0a0a0'></div><div class='rc' style='left:21px;top:282px;width:70px;height:24px'>2</div><div class='rc' style='left:91px;top:282px;width:50px;height:24px'>2018</div><div class='rc' style='left:141px;top:282px;width:90px;height:24px'>7 668,05 ₽</div><div class='rc' style='left:231px;top:282px;width:100px;height:24px'>2 170,55</div><div class='rc' style='left:331px;top:282px;width:90px;height:24px'>0,00</div><div class='rc' style='left:421px;top:282px;width:89px;height:24px'>0,00</div><div class='rc' style='left:510px;top:282px;width:176px;height:24px'>Однотарифный сельский</div><div class='a' style='left:0;top:306px;width:20px;height:24px;background:#fff;border-bottom:1px solid #e4e5e7'></div><div class='a' style='left:9px;top:307px;width:9px;height:21px;background:#f3f4f6'></div><div class='a' style='left:18px;top:306px;width:1px;height:24px;background:#d9dadc'></div><div class='a' style='left:20px;top:306px;width:1px;height:24px;background:#a0a0a0'></div><div class='rc' style='left:21px;top:306px;width:70px;height:24px'></div><div class='rc' style='left:91px;top:306px;width:50px;height:24px'></div><div class='rc' style='left:141px;top:306px;width:90px;height:24px'></div><div class='rc' style='left:231px;top:306px;width:100px;height:24px'></div><div class='rc' style='left:331px;top:306px;width:90px;height:24px'></div><div class='rc' style='left:421px;top:306px;width:89px;height:24px'></div><div class='rc' style='left:510px;top:306px;width:176px;height:24px'></div><div class='a' style='left:0;top:0;width:686px;height:313px;box-shadow:inset 1px 1px 0 rgba(0,0,0,.2)'></div><div class='a' style='left:686px;top:0;width:737px;height:1px;background:#b8b8b8'></div></div><div class='a' style='left:1683px;top:92px;width:21px;height:313px;background:linear-gradient(90deg,#e3e3e3 0,#eeeeee 2px,#f1f1f1 50%,#eeeeee 100%)'></div><svg class='a' style='left:1688px;top:99px' width='10' height='6'><path d='M0.5 5.5L5 0.8 9.5 5.5z' fill='#333'/></svg><svg class='a' style='left:1688px;top:392px' width='10' height='6'><path d='M0.5 0.5L5 5.2 9.5 0.5z' fill='#333'/></svg><div class='a' style='left:1684px;top:114px;width:19px;height:83px;border:1px solid #9a9a9a;border-radius:2px;background:linear-gradient(90deg,#f6f6f6 0,#eeeeee 40%,#dadbdd 41%,#d7d8da 80%,#c9cacc 100%)'></div><div class='a' style='left:1688px;top:150px;width:9px;height:1px;background:linear-gradient(90deg,#222,#555 30%,#666);box-shadow:0 1px 0 rgba(255,255,255,.9)'></div><div class='a' style='left:1688px;top:154px;width:9px;height:1px;background:linear-gradient(90deg,#222,#555 30%,#666);box-shadow:0 1px 0 rgba(255,255,255,.9)'></div><div class='a' style='left:1688px;top:158px;width:9px;height:1px;background:linear-gradient(90deg,#222,#555 30%,#666);box-shadow:0 1px 0 rgba(255,255,255,.9)'></div>
<div class='t' style='left:16px;top:413px;font-weight:bold;font-size:16px;letter-spacing:0.15px'>Долги участков</div>
<div class='g' style='left:12px;top:431px;width:547px;height:271px'><div class='a' style='left:0;top:0;width:20px;height:41px;background:#f4f5f7;box-shadow:inset 1px 1px 0 #fff'></div><div class='a' style='left:20px;top:0;width:1px;height:41px;background:#a0a0a0'></div><div class='hc' style='left:21px;top:0;width:90px;height:41px'></div><div class='t' style='left:28px;top:14.3px;line-height:16px;font-size:14.6px;letter-spacing:0.1px'>Участок</div><div class='hc' style='left:111px;top:0;width:100px;height:41px'></div><div class='t' style='left:118px;top:6.3px;line-height:16px;font-size:14.6px;letter-spacing:0.1px'>Предыдущая
оплата</div><div class='hc' style='left:211px;top:0;width:90px;height:41px'></div><div class='t' style='left:218px;top:6.3px;line-height:16px;font-size:14.6px;letter-spacing:0.1px'>Переплата
по ЭЭ</div><div class='hc' style='left:301px;top:0;width:85px;height:41px'></div><div class='t' style='left:308px;top:6.3px;line-height:16px;font-size:14.6px;letter-spacing:0.1px'>Долг по
ЭЭ</div><div class='a' style='left:21px;top:39px;width:365px;height:1px;background:#e2e3e6'></div><div class='a' style='left:21px;top:40px;width:365px;height:1px;background:#fff'></div><div class='a' style='left:0;top:41px;width:386px;height:1px;background:#a0a0a0'></div><div class='a' style='left:0;top:42px;width:20px;height:24px;background:#fff;border-bottom:1px solid #e4e5e7'></div><div class='a' style='left:9px;top:43px;width:9px;height:21px;background:#f3f4f6'></div><div class='a' style='left:18px;top:42px;width:1px;height:24px;background:#d9dadc'></div><div class='a' style='left:20px;top:42px;width:1px;height:24px;background:#a0a0a0'></div><div class='rc sel' style='left:21px;top:42px;width:90px;height:24px'>Уч. №  1</div><div class='rc' style='left:111px;top:42px;width:100px;height:24px'>01.03.2018</div><div class='rc' style='left:211px;top:42px;width:90px;height:24px'>0,00 ₽</div><div class='rc' style='left:301px;top:42px;width:85px;height:24px'>2 299,64 ₽</div><div class='a' style='left:0;top:66px;width:20px;height:24px;background:#fff;border-bottom:1px solid #e4e5e7'></div><div class='a' style='left:9px;top:67px;width:9px;height:21px;background:#f3f4f6'></div><div class='a' style='left:18px;top:66px;width:1px;height:24px;background:#d9dadc'></div><div class='a' style='left:20px;top:66px;width:1px;height:24px;background:#a0a0a0'></div><div class='rc' style='left:21px;top:66px;width:90px;height:24px'>Уч. №  2</div><div class='rc' style='left:111px;top:66px;width:100px;height:24px'>15.03.2018</div><div class='rc' style='left:211px;top:66px;width:90px;height:24px'>356,32 ₽</div><div class='rc' style='left:301px;top:66px;width:85px;height:24px'>0,00 ₽</div><div class='a' style='left:0;top:90px;width:20px;height:24px;background:#fff;border-bottom:1px solid #e4e5e7'></div><div class='a' style='left:9px;top:91px;width:9px;height:21px;background:#f3f4f6'></div><div class='a' style='left:18px;top:90px;width:1px;height:24px;background:#d9dadc'></div><div class='a' style='left:20px;top:90px;width:1px;height:24px;background:#a0a0a0'></div><div class='rc' style='left:21px;top:90px;width:90px;height:24px'>Уч. №  3</div><div class='rc' style='left:111px;top:90px;width:100px;height:24px'>05.07.2018</div><div class='rc' style='left:211px;top:90px;width:90px;height:24px'>359,52 ₽</div><div class='rc' style='left:301px;top:90px;width:85px;height:24px'>0,00 ₽</div><div class='a' style='left:0;top:114px;width:20px;height:24px;background:#fff;border-bottom:1px solid #e4e5e7'></div><div class='a' style='left:9px;top:115px;width:9px;height:21px;background:#f3f4f6'></div><div class='a' style='left:18px;top:114px;width:1px;height:24px;background:#d9dadc'></div><div class='a' style='left:20px;top:114px;width:1px;height:24px;background:#a0a0a0'></div><div class='rc' style='left:21px;top:114px;width:90px;height:24px'>Уч. №  4</div><div class='rc' style='left:111px;top:114px;width:100px;height:24px'>16.08.2018</div><div class='rc' style='left:211px;top:114px;width:90px;height:24px'>967,69 ₽</div><div class='rc' style='left:301px;top:114px;width:85px;height:24px'>0,00 ₽</div><div class='a' style='left:0;top:138px;width:20px;height:24px;background:#fff;border-bottom:1px solid #e4e5e7'></div><div class='a' style='left:9px;top:139px;width:9px;height:21px;background:#f3f4f6'></div><div class='a' style='left:18px;top:138px;width:1px;height:24px;background:#d9dadc'></div><div class='a' style='left:20px;top:138px;width:1px;height:24px;background:#a0a0a0'></div><div class='rc' style='left:21px;top:138px;width:90px;height:24px'>Уч. №  5</div><div class='rc' style='left:111px;top:138px;width:100px;height:24px'>01.01.2000</div><div class='rc' style='left:211px;top:138px;width:90px;height:24px'>0,00 ₽</div><div class='rc' style='left:301px;top:138px;width:85px;height:24px'>60,00 ₽</div><div class='a' style='left:0;top:162px;width:20px;height:24px;background:#fff;border-bottom:1px solid #e4e5e7'></div><div class='a' style='left:9px;top:163px;width:9px;height:21px;background:#f3f4f6'></div><div class='a' style='left:18px;top:162px;width:1px;height:24px;background:#d9dadc'></div><div class='a' style='left:20px;top:162px;width:1px;height:24px;background:#a0a0a0'></div><div class='rc' style='left:21px;top:162px;width:90px;height:24px'>Уч. №  6</div><div class='rc' style='left:111px;top:162px;width:100px;height:24px'>01.01.2000</div><div class='rc' style='left:211px;top:162px;width:90px;height:24px'>0,00 ₽</div><div class='rc' style='left:301px;top:162px;width:85px;height:24px'>20 970,65 ₽</div><div class='a' style='left:0;top:186px;width:20px;height:24px;background:#fff;border-bottom:1px solid #e4e5e7'></div><div class='a' style='left:9px;top:187px;width:9px;height:21px;background:#f3f4f6'></div><div class='a' style='left:18px;top:186px;width:1px;height:24px;background:#d9dadc'></div><div class='a' style='left:20px;top:186px;width:1px;height:24px;background:#a0a0a0'></div><div class='rc' style='left:21px;top:186px;width:90px;height:24px'>Уч. №  16</div><div class='rc' style='left:111px;top:186px;width:100px;height:24px'>01.03.2018</div><div class='rc' style='left:211px;top:186px;width:90px;height:24px'>2 807,96 ₽</div><div class='rc' style='left:301px;top:186px;width:85px;height:24px'>0,00 ₽</div><div class='a' style='left:0;top:210px;width:20px;height:24px;background:#fff;border-bottom:1px solid #e4e5e7'></div><div class='a' style='left:9px;top:211px;width:9px;height:21px;background:#f3f4f6'></div><div class='a' style='left:18px;top:210px;width:1px;height:24px;background:#d9dadc'></div><div class='a' style='left:20px;top:210px;width:1px;height:24px;background:#a0a0a0'></div><div class='rc' style='left:21px;top:210px;width:90px;height:24px'>Уч. №  17</div><div class='rc' style='left:111px;top:210px;width:100px;height:24px'>14.06.2018</div><div class='rc' style='left:211px;top:210px;width:90px;height:24px'>0,00 ₽</div><div class='rc' style='left:301px;top:210px;width:85px;height:24px'>1 109,07 ₽</div><div class='a' style='left:0;top:234px;width:20px;height:24px;background:#fff;border-bottom:1px solid #e4e5e7'></div><div class='a' style='left:9px;top:235px;width:9px;height:21px;background:#f3f4f6'></div><div class='a' style='left:18px;top:234px;width:1px;height:24px;background:#d9dadc'></div><div class='a' style='left:20px;top:234px;width:1px;height:24px;background:#a0a0a0'></div><div class='rc' style='left:21px;top:234px;width:90px;height:24px'>Уч. №  18</div><div class='rc' style='left:111px;top:234px;width:100px;height:24px'>05.04.2018</div><div class='rc' style='left:211px;top:234px;width:90px;height:24px'>0,00 ₽</div><div class='rc' style='left:301px;top:234px;width:85px;height:24px'>30 804,76 ₽</div><div class='a' style='left:0;top:258px;width:20px;height:24px;background:#fff;border-bottom:1px solid #e4e5e7'></div><div class='a' style='left:9px;top:259px;width:9px;height:21px;background:#f3f4f6'></div><div class='a' style='left:18px;top:258px;width:1px;height:24px;background:#d9dadc'></div><div class='a' style='left:20px;top:258px;width:1px;height:24px;background:#a0a0a0'></div><div class='rc' style='left:21px;top:258px;width:90px;height:24px'>Уч. №  19</div><div class='rc' style='left:111px;top:258px;width:100px;height:24px'>01.01.2000</div><div class='rc' style='left:211px;top:258px;width:90px;height:24px'>0,00 ₽</div><div class='rc' style='left:301px;top:258px;width:85px;height:24px'>0,00 ₽</div><div class='a' style='left:0;top:0;width:386px;height:269px;box-shadow:inset 1px 1px 0 rgba(0,0,0,.2)'></div><div class='a' style='left:386px;top:0;width:547px;height:1px;background:#b8b8b8'></div></div><div class='a' style='left:537px;top:432px;width:21px;height:269px;background:linear-gradient(90deg,#e3e3e3 0,#eeeeee 2px,#f1f1f1 50%,#eeeeee 100%)'></div><svg class='a' style='left:542px;top:439px' width='10' height='6'><path d='M0.5 5.5L5 0.8 9.5 5.5z' fill='#333'/></svg><svg class='a' style='left:542px;top:688px' width='10' height='6'><path d='M0.5 0.5L5 5.2 9.5 0.5z' fill='#333'/></svg><div class='a' style='left:538px;top:455px;width:19px;height:18px;border:1px solid #9a9a9a;border-radius:2px;background:linear-gradient(90deg,#f6f6f6 0,#eeeeee 40%,#dadbdd 41%,#d7d8da 80%,#c9cacc 100%)'></div><div class='a' style='left:542px;top:459px;width:9px;height:1px;background:linear-gradient(90deg,#222,#555 30%,#666);box-shadow:0 1px 0 rgba(255,255,255,.9)'></div><div class='a' style='left:542px;top:463px;width:9px;height:1px;background:linear-gradient(90deg,#222,#555 30%,#666);box-shadow:0 1px 0 rgba(255,255,255,.9)'></div><div class='a' style='left:542px;top:467px;width:9px;height:1px;background:linear-gradient(90deg,#222,#555 30%,#666);box-shadow:0 1px 0 rgba(255,255,255,.9)'></div>
<div class='t' style='left:964px;top:413px;font-weight:bold;font-size:16px;letter-spacing:0px'>Суммарно по всем тарифам</div>
<div class='g' style='left:963px;top:431px;width:737px;height:271px'><div class='a' style='left:0;top:0;width:20px;height:41px;background:#f4f5f7;box-shadow:inset 1px 1px 0 #fff'></div><div class='a' style='left:20px;top:0;width:1px;height:41px;background:#a0a0a0'></div><div class='hc' style='left:21px;top:0;width:100px;height:41px'></div><div class='t' style='left:28px;top:14.3px;line-height:16px;font-size:14.6px;letter-spacing:0.1px'>Месяц</div><div class='hc' style='left:121px;top:0;width:100px;height:41px'></div><div class='t' style='left:128px;top:14.3px;line-height:16px;font-size:14.6px;letter-spacing:0.1px'>Год</div><div class='hc' style='left:221px;top:0;width:100px;height:41px'></div><div class='t' style='left:228px;top:6.3px;line-height:16px;font-size:14.6px;letter-spacing:0.1px'>Начислено,
руб</div><div class='hc' style='left:321px;top:0;width:100px;height:41px'></div><div class='t' style='left:328px;top:6.3px;line-height:16px;font-size:14.6px;letter-spacing:0.1px'>Однотариф,
кВт</div><div class='hc' style='left:421px;top:0;width:100px;height:41px'></div><div class='t' style='left:428px;top:14.3px;line-height:16px;font-size:14.6px;letter-spacing:0.1px'>День, кВт</div><div class='hc' style='left:521px;top:0;width:100px;height:41px'></div><div class='t' style='left:528px;top:14.3px;line-height:16px;font-size:14.6px;letter-spacing:0.1px'>Ночь, кВт</div><div class='a' style='left:21px;top:39px;width:600px;height:1px;background:#e2e3e6'></div><div class='a' style='left:21px;top:40px;width:600px;height:1px;background:#fff'></div><div class='a' style='left:0;top:41px;width:621px;height:1px;background:#a0a0a0'></div><div class='a' style='left:0;top:42px;width:20px;height:24px;background:#fff;border-bottom:1px solid #e4e5e7'></div><div class='a' style='left:9px;top:43px;width:9px;height:21px;background:#f3f4f6'></div><div class='a' style='left:18px;top:42px;width:1px;height:24px;background:#d9dadc'></div><div class='a' style='left:20px;top:42px;width:1px;height:24px;background:#a0a0a0'></div><div class='rc sel' style='left:21px;top:42px;width:100px;height:24px'>12</div><div class='rc' style='left:121px;top:42px;width:100px;height:24px'>2017</div><div class='rc' style='left:221px;top:42px;width:100px;height:24px'>0,00 ₽</div><div class='rc' style='left:321px;top:42px;width:100px;height:24px'>0,00</div><div class='rc' style='left:421px;top:42px;width:100px;height:24px'>0,00</div><div class='rc' style='left:521px;top:42px;width:100px;height:24px'>0,00</div><div class='a' style='left:0;top:66px;width:20px;height:24px;background:#fff;border-bottom:1px solid #e4e5e7'></div><div class='a' style='left:9px;top:67px;width:9px;height:21px;background:#f3f4f6'></div><div class='a' style='left:18px;top:66px;width:1px;height:24px;background:#d9dadc'></div><div class='a' style='left:20px;top:66px;width:1px;height:24px;background:#a0a0a0'></div><div class='rc' style='left:21px;top:66px;width:100px;height:24px'>1</div><div class='rc' style='left:121px;top:66px;width:100px;height:24px'>2018</div><div class='rc' style='left:221px;top:66px;width:100px;height:24px'>0,00 ₽</div><div class='rc' style='left:321px;top:66px;width:100px;height:24px'>0,00</div><div class='rc' style='left:421px;top:66px;width:100px;height:24px'>692,00</div><div class='rc' style='left:521px;top:66px;width:100px;height:24px'>335,00</div><div class='a' style='left:0;top:90px;width:20px;height:24px;background:#fff;border-bottom:1px solid #e4e5e7'></div><div class='a' style='left:9px;top:91px;width:9px;height:21px;background:#f3f4f6'></div><div class='a' style='left:18px;top:90px;width:1px;height:24px;background:#d9dadc'></div><div class='a' style='left:20px;top:90px;width:1px;height:24px;background:#a0a0a0'></div><div class='rc' style='left:21px;top:90px;width:100px;height:24px'>2</div><div class='rc' style='left:121px;top:90px;width:100px;height:24px'>2018</div><div class='rc' style='left:221px;top:90px;width:100px;height:24px'>181 859,90 ₽</div><div class='rc' style='left:321px;top:90px;width:100px;height:24px'>29 157,41</div><div class='rc' style='left:421px;top:90px;width:100px;height:24px'>6 773,37</div><div class='rc' style='left:521px;top:90px;width:100px;height:24px'>2 050,22</div><div class='a' style='left:0;top:114px;width:20px;height:24px;background:#fff;border-bottom:1px solid #e4e5e7'></div><div class='a' style='left:9px;top:115px;width:9px;height:21px;background:#f3f4f6'></div><div class='a' style='left:18px;top:114px;width:1px;height:24px;background:#d9dadc'></div><div class='a' style='left:20px;top:114px;width:1px;height:24px;background:#a0a0a0'></div><div class='rc' style='left:21px;top:114px;width:100px;height:24px'>3</div><div class='rc' style='left:121px;top:114px;width:100px;height:24px'>2018</div><div class='rc' style='left:221px;top:114px;width:100px;height:24px'>108 030,26 ₽</div><div class='rc' style='left:321px;top:114px;width:100px;height:24px'>14 365,37</div><div class='rc' style='left:421px;top:114px;width:100px;height:24px'>6 961,63</div><div class='rc' style='left:521px;top:114px;width:100px;height:24px'>2 655,70</div><div class='a' style='left:0;top:138px;width:20px;height:24px;background:#fff;border-bottom:1px solid #e4e5e7'></div><div class='a' style='left:9px;top:139px;width:9px;height:21px;background:#f3f4f6'></div><div class='a' style='left:18px;top:138px;width:1px;height:24px;background:#d9dadc'></div><div class='a' style='left:20px;top:138px;width:1px;height:24px;background:#a0a0a0'></div><div class='rc' style='left:21px;top:138px;width:100px;height:24px'>4</div><div class='rc' style='left:121px;top:138px;width:100px;height:24px'>2018</div><div class='rc' style='left:221px;top:138px;width:100px;height:24px'>75 537,43 ₽</div><div class='rc' style='left:321px;top:138px;width:100px;height:24px'>9 742,90</div><div class='rc' style='left:421px;top:138px;width:100px;height:24px'>4 809,71</div><div class='rc' style='left:521px;top:138px;width:100px;height:24px'>2 795,40</div><div class='a' style='left:0;top:162px;width:20px;height:24px;background:#fff;border-bottom:1px solid #e4e5e7'></div><div class='a' style='left:9px;top:163px;width:9px;height:21px;background:#f3f4f6'></div><div class='a' style='left:18px;top:162px;width:1px;height:24px;background:#d9dadc'></div><div class='a' style='left:20px;top:162px;width:1px;height:24px;background:#a0a0a0'></div><div class='rc' style='left:21px;top:162px;width:100px;height:24px'>5</div><div class='rc' style='left:121px;top:162px;width:100px;height:24px'>2018</div><div class='rc' style='left:221px;top:162px;width:100px;height:24px'>50 900,66 ₽</div><div class='rc' style='left:321px;top:162px;width:100px;height:24px'>5 678,61</div><div class='rc' style='left:421px;top:162px;width:100px;height:24px'>4 138,17</div><div class='rc' style='left:521px;top:162px;width:100px;height:24px'>1 990,17</div><div class='a' style='left:0;top:186px;width:20px;height:24px;background:#fff;border-bottom:1px solid #e4e5e7'></div><div class='a' style='left:9px;top:187px;width:9px;height:21px;background:#f3f4f6'></div><div class='a' style='left:18px;top:186px;width:1px;height:24px;background:#d9dadc'></div><div class='a' style='left:20px;top:186px;width:1px;height:24px;background:#a0a0a0'></div><div class='rc' style='left:21px;top:186px;width:100px;height:24px'>6</div><div class='rc' style='left:121px;top:186px;width:100px;height:24px'>2018</div><div class='rc' style='left:221px;top:186px;width:100px;height:24px'>30 385,30 ₽</div><div class='rc' style='left:321px;top:186px;width:100px;height:24px'>3 633,33</div><div class='rc' style='left:421px;top:186px;width:100px;height:24px'>2 482,26</div><div class='rc' style='left:521px;top:186px;width:100px;height:24px'>1 355,31</div><div class='a' style='left:0;top:210px;width:20px;height:24px;background:#fff;border-bottom:1px solid #e4e5e7'></div><div class='a' style='left:9px;top:211px;width:9px;height:21px;background:#f3f4f6'></div><div class='a' style='left:18px;top:210px;width:1px;height:24px;background:#d9dadc'></div><div class='a' style='left:20px;top:210px;width:1px;height:24px;background:#a0a0a0'></div><div class='rc' style='left:21px;top:210px;width:100px;height:24px'>7</div><div class='rc' style='left:121px;top:210px;width:100px;height:24px'>2018</div><div class='rc' style='left:221px;top:210px;width:100px;height:24px'>58 112,15 ₽</div><div class='rc' style='left:321px;top:210px;width:100px;height:24px'>7 164,96</div><div class='rc' style='left:421px;top:210px;width:100px;height:24px'>4 263,30</div><div class='rc' style='left:521px;top:210px;width:100px;height:24px'>2 216,79</div><div class='a' style='left:0;top:234px;width:20px;height:24px;background:#fff;border-bottom:1px solid #e4e5e7'></div><div class='a' style='left:9px;top:235px;width:9px;height:21px;background:#f3f4f6'></div><div class='a' style='left:18px;top:234px;width:1px;height:24px;background:#d9dadc'></div><div class='a' style='left:20px;top:234px;width:1px;height:24px;background:#a0a0a0'></div><div class='rc' style='left:21px;top:234px;width:100px;height:24px'>8</div><div class='rc' style='left:121px;top:234px;width:100px;height:24px'>2018</div><div class='rc' style='left:221px;top:234px;width:100px;height:24px'>42 721,04 ₽</div><div class='rc' style='left:321px;top:234px;width:100px;height:24px'>362,09</div><div class='rc' style='left:421px;top:234px;width:100px;height:24px'>7 056,65</div><div class='rc' style='left:521px;top:234px;width:100px;height:24px'>3 375,24</div><div class='a' style='left:0;top:0;width:621px;height:269px;box-shadow:inset 1px 1px 0 rgba(0,0,0,.2)'></div><div class='a' style='left:621px;top:0;width:737px;height:1px;background:#b8b8b8'></div></div>
<div class='btn' style='left:581px;top:425px;width:171px;height:48px'>Внесение показаний</div>
<div class='btn' style='left:765px;top:425px;width:171px;height:48px'>История отключенных<br>участков</div>
<div class='btn' style='left:581px;top:507px;width:171px;height:48px'>Изменение показаний</div>
<div class='btn' style='left:765px;top:507px;width:171px;height:48px'>Отчет по всем<br>показаниям</div>
<div class='btn' style='left:765px;top:595px;width:171px;height:48px'>Обновить</div>
<div class='t' style='left:581px;top:590px'>Суммарный долг</div>
<div class='a' style='left:580px;top:608px;width:132px;height:23px;border:1px solid;border-color:#a3a6ab #dadde3 #e1e5ea #dadde3;border-radius:2px;background:#fff'></div>
<div class='t' style='left:583px;top:612px;font-size:13.5px;letter-spacing:-0.45px'>458 327,32 ₽</div>
<div class='t' style='left:581px;top:655px'>Суммарная переплата</div>
<div class='a' style='left:580px;top:672px;width:132px;height:22px;border:1px solid;border-color:#a3a6ab #dadde3 #e1e5ea #dadde3;border-radius:2px;background:#fff'></div>
<div class='t' style='left:583px;top:677px;font-size:13.5px;letter-spacing:-0.45px'>531 585,98 ₽</div>
<div class='t' style='left:226px;top:714px'>Выбор</div>
<div class='a' style='left:277px;top:710px;width:148px;height:24px;border:1px solid;border-color:#a3a6ab #dadde3 #e1e5ea #dadde3;border-radius:2px;background:#fff'></div>
<div class='t' style='left:280px;top:714px'>Участка №</div>
<svg class='a' style='left:409px;top:720px' width='10' height='6'><path d='M0 0H10L5 5z' fill='#000'/></svg>
<div class='a' style='left:279px;top:760px;width:144px;height:24px;border:1px solid;border-color:#3d7bad #a4c9e3 #b7d4ec #a4c9e3;border-radius:2px;background:#fff'></div>
<div class='a' style='left:282px;top:763px;width:65px;height:16px;background:#3399ff'></div>
<div class='t' style='left:282px;top:764px;color:#fff;letter-spacing:-0.6px'>Уч. №  160</div>
<svg class='a' style='left:407px;top:770px' width='10' height='6'><path d='M0 0H10L5 5z' fill='#000'/></svg>
<div class='btn' style='left:437px;top:759px;width:122px;height:26px'>Квитанция</div>
<div class='a' style='left:565px;top:706px;width:959px;height:268px;border:1px solid #646464;border-bottom:none;background:#fff'></div>
<div class='a' style='left:566px;top:707px;width:957px;height:28px;background:linear-gradient(#fbfbfb,#f6f6f6 50%,#ececec)'></div>
<div class='a' style='left:613px;top:708px;width:40px;height:26px;background:#fff'></div>
<div class='t' style='left:616px;top:713px;font-size:15.5px'>1</div>
<div class='t' style='left:658px;top:713px;font-size:15.5px'>из</div>
<div class='t' style='left:683px;top:713px;font-size:15.5px'>1</div>
<svg class='a' style='left:569px;top:712px' width='180' height='18'>
<rect x='1' y='1.5' width='2' height='12' fill='#a9a9a9'/><path d='M11 1.5L4 7.5 11 13.5z' fill='#b5b5b5'/>
<path d='M32 2.5L25 7.5 32 12.5z' fill='#b9b9b9'/>
<path d='M133 2.5L140 7.5 133 12.5z' fill='#b9b9b9'/>
<path d='M154 1.5L161 7.5 154 13.5z' fill='#b5b5b5'/><rect x='162' y='1.5' width='2' height='12' fill='#a9a9a9'/>
</svg>
<div class='a' style='left:745px;top:712px;width:1px;height:18px;background:#b8b8b8'></div>
<div class='a' style='left:852px;top:712px;width:1px;height:18px;background:#b8b8b8'></div>
<svg class='a' style='left:745px;top:706px' width='105' height='28' viewBox='0 0 105 28'>
<defs>
<linearGradient id='pg' x1='0' y1='0' x2='0' y2='1'><stop offset='0' stop-color='#6a6a6a'/><stop offset='.35' stop-color='#d8d8d8'/><stop offset='.7' stop-color='#a8a8a8'/><stop offset='1' stop-color='#5e5e5e'/></linearGradient>
<linearGradient id='gg' x1='0' y1='0' x2='1' y2='1'><stop offset='0' stop-color='#8fcf8f'/><stop offset='.6' stop-color='#4a9a4a'/><stop offset='1' stop-color='#1f4f1f'/></linearGradient>
<linearGradient id='bg' x1='0' y1='0' x2='1' y2='1'><stop offset='0' stop-color='#7b8ee8'/><stop offset='1' stop-color='#3b4fc0'/></linearGradient>
<linearGradient id='wg' x1='0' y1='0' x2='1' y2='1'><stop offset='0' stop-color='#fafafa'/><stop offset='1' stop-color='#c9d6f0'/></linearGradient>
</defs>
<rect x='11' y='6' width='6' height='6' fill='#fff' stroke='#7d8ca0' stroke-width='.8'/>
<rect x='6' y='9.5' width='16' height='9.5' rx='2' fill='url(#pg)' stroke='#555' stroke-width='.8'/>
<rect x='14.5' y='14' width='3' height='1.2' fill='#3a8ee8'/>
<rect x='11' y='17' width='6' height='5' fill='#fff' stroke='#6a86aa' stroke-width='.8'/>
<rect x='13.3' y='18.6' width='1.4' height='1.4' fill='#3a6ee8'/>
<rect x='29.5' y='6.5' width='15' height='14.5' rx='1.2' fill='url(#gg)' stroke='#2e5e2e' stroke-width='.8'/>
<rect x='32.5' y='7.5' width='9.5' height='12.5' fill='url(#wg)' stroke='#3a4a6a' stroke-width='.7'/>
<path d='M34 10.5h6.5M34 12.5h6.5M34 14.5h6.5M34 16.5h6.5' stroke='#6a86c0' stroke-width='.9'/>
<path d='M52.5 8.2Q55 6.3 58 8.2V19Q55 17 52.5 19.3z' fill='#dcdcdc' stroke='#3a4a60' stroke-width='.9'/>
<rect x='58.5' y='9.5' width='8.3' height='10' fill='#d6e2f8' stroke='#222' stroke-width='.9'/>
<rect x='75' y='7' width='12' height='11' fill='url(#bg)' stroke='#3345a8' stroke-width='.6'/>
<rect x='77' y='7.5' width='7.5' height='4.5' fill='#eef0fa'/>
<rect x='77.5' y='14.5' width='6' height='3.5' fill='#333'/>
<path d='M83 13.5Q85 18 89 19.5' stroke='#2aa82a' stroke-width='1.6' fill='none'/>
<path d='M86 19.5L89.5 16.5 89.5 21.5z' fill='#22b022'/>
<path d='M92 12.8h5l-2.5 3z' fill='#000'/>
</svg>
<div class='a' style='left:861px;top:708px;width:94px;height:26px;background:#fff'></div>
<div class='a' style='left:955px;top:708px;width:15px;height:26px;background:#f7f7f7'></div>
<div class='t' style='left:865px;top:713px;font-size:15px;width:84px;overflow:hidden'>Ширина стр</div>
<svg class='a' style='left:958px;top:719px' width='8' height='5'><path d='M0 0H8L4 4z' fill='#000'/></svg>
<div class='a' style='left:982px;top:708px;width:75px;height:26px;background:#fff'></div>
<div class='t' style='left:1067px;top:713px;font-size:15px;color:#8a8a8a'>Найти</div>
<div class='a' style='left:1121px;top:715px;width:1px;height:12px;background:#c8c8c8'></div>
<div class='t' style='left:1132px;top:713px;font-size:15px;color:#8a8a8a'>Следующий</div>
<div class='t' style='left:785px;top:761px;font-size:18.5px;letter-spacing:0.1px'>Оплата электроэнергии по состоянию на 23 июня 2018 г.</div>
<div class='a' style='left:576px;top:803px;width:945px;height:107px;border:1px solid #d0d0d0'></div>
<div class='a' style='left:577px;top:876px;width:943px;height:2px;background:#d0d0d0'></div>
<div class='a' style='left:699px;top:803px;width:2px;height:107px;background:#d0d0d0'></div>
<div class='a' style='left:1108px;top:803px;width:2px;height:107px;background:#d0d0d0'></div>
<div class='a' style='left:1249px;top:803px;width:2px;height:107px;background:#d0d0d0'></div>
<div class='a' style='left:1388px;top:803px;width:2px;height:107px;background:#d0d0d0'></div>

<div class='t' style='left:578px;width:122px;top:829px;text-align:center;font-size:18px;line-height:21.3px;letter-spacing:0.55px'>Участок</div>
<div class='t' style='left:701px;width:408px;top:829px;text-align:center;font-size:18px;line-height:21.3px;letter-spacing:0.55px'>Хозяин</div>
<div class='t' style='left:1106px;width:140px;top:808px;text-align:center;font-size:18px;line-height:21.3px;letter-spacing:0.55px'>Дата<br>предыдущей<br>оплаты</div>
<div class='t' style='left:1251px;width:138px;top:829px;text-align:center;font-size:18px;line-height:21.3px;letter-spacing:0.55px'>Долг</div>
<div class='t' style='left:1390px;width:131px;top:829px;text-align:center;font-size:18px;line-height:21.3px;letter-spacing:0.55px'>Переплата</div>
<div class='t' style='left:578px;width:122px;top:881px;text-align:center;font-size:18px;line-height:21.3px;letter-spacing:0.55px'>Уч. №  160</div>
<div class='t' style='left:701px;width:408px;top:881px;text-align:center;font-size:18px;line-height:21.3px;letter-spacing:0.55px'>Хозяин  126</div>
<div class='t' style='left:1110px;width:140px;top:881px;text-align:center;font-size:18px;line-height:21.3px;letter-spacing:0.55px'>02.06.2018</div>
<div class='t' style='left:1251px;width:138px;top:881px;text-align:center;font-size:18px;line-height:21.3px;letter-spacing:0.55px'>0,00</div>
<div class='t' style='left:1390px;width:131px;top:881px;text-align:center;font-size:18px;line-height:21.3px;letter-spacing:0.55px'>60,64</div>
<div class='t' style='left:1256px;top:919px;font-size:18px;letter-spacing:0.5px'>0,00 ₽</div>
<div class='t' style='left:1398px;top:916px;font-size:18px;letter-spacing:0.5px'>60,64 ₽</div>
<div class='a' style='left:0;top:1078px;width:1920px;height:1px;background:#4d5868'></div><div class='a' style='left:0;top:1079px;width:1920px;height:1px;background:#d9e5f3'></div>
<div class='a' style='left:72px;top:1078px;width:66px;height:1px;background:#111;border-radius:2px 2px 0 0'></div><div class='a' style='left:73px;top:1079px;width:64px;height:1px;background:#fff'></div>
<div class='a' style='left:212px;top:1078px;width:58px;height:1px;background:#111;border-radius:2px 2px 0 0'></div><div class='a' style='left:213px;top:1079px;width:56px;height:1px;background:#fff'></div>
<div class='a' style='left:492px;top:1078px;width:65px;height:1px;background:#111;border-radius:2px 2px 0 0'></div><div class='a' style='left:493px;top:1079px;width:63px;height:1px;background:#fff'></div>
<div class='a' style='left:562px;top:1078px;width:65px;height:1px;background:#111;border-radius:2px 2px 0 0'></div><div class='a' style='left:563px;top:1079px;width:63px;height:1px;background:#fff'></div>
<div class='a' style='left:632px;top:1078px;width:66px;height:1px;background:#111;border-radius:2px 2px 0 0'></div><div class='a' style='left:633px;top:1079px;width:64px;height:1px;background:#fff'></div>
</body></html>
